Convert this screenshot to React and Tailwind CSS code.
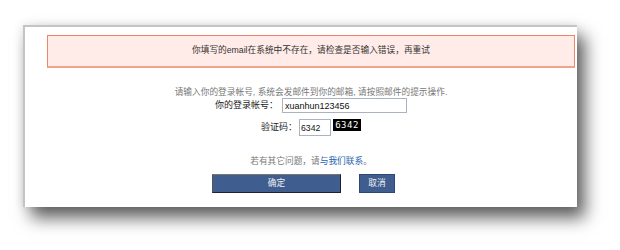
import React from "react";

const font = "font-['Liberation_Sans','Noto_Sans_CJK_SC',sans-serif]";

export default function App() {
  return (
    <div className={`w-[620px] h-[250px] bg-white pl-[23px] pt-[25px] ${font}`}>
      {/* Panel */}
      <div className="w-[554px] h-[182px] bg-white border-l-2 border-t-2 border-[#c4c4c4] shadow-[8px_11px_16px_rgba(0,0,0,0.62),0_0_10px_rgba(0,0,0,0.1)]">
        <div className="ml-[22px] w-[528px] flex flex-col">
          {/* Error message */}
          <div className="mt-[8px] h-[33px] flex items-center justify-center bg-[#ffebe8] border border-[#e9866c] border-b-2 border-b-[#f2a38c] text-[8.7px] text-[#333]">
            你填写的email在系统中不存在，请检查是否输入错误，再重试
          </div>

          <p className="mt-[18px] h-[12px] leading-[12px] text-center text-[8.7px] text-[#777]">
            请输入你的登录帐号, 系统会发邮件到你的邮箱, 请按照邮件的提示操作.
          </p>

          <div className="flex items-center justify-center gap-[4px]">
            <span className="text-[9px] text-[#222]">你的登录帐号：</span>
            <input
              defaultValue="xuanhun123456"
              className="w-[125px] h-[15px] px-[2px] border border-[#a9b3c4] text-[9px] text-[#111] outline-none"
            />
          </div>

          <div className="mt-[6px] flex items-center justify-center">
            <span className="text-[9px] text-[#222]">验证码：</span>
            <input
              defaultValue="6342"
              className="ml-[2px] w-[32px] h-[17px] px-[1px] border border-[#a9b3c4] text-[8.7px] text-[#111] outline-none"
            />
            <span className="ml-[2px] self-start w-[28px] h-[12px] bg-black text-white text-[9px] leading-[12px] text-center tracking-[0.5px] font-['DejaVu_Sans_Mono',monospace]">
              6342
            </span>
          </div>

          <p className="mt-[19px] h-[12px] leading-[12px] text-center text-[8.7px] text-[#777]">
            若有其它问题，请<span className="text-[#1d5fb0]">与我们联系</span>。
          </p>

          <div className="mt-[7px] pr-[15px] flex justify-center gap-[18px]">
            <button className="w-[129px] h-[19px] bg-[#3f5d8f] border border-[#1c2233] border-t-[#777] border-l-[#555] text-[#f0f0f0] text-[8.7px]">
              确定
            </button>
            <button className="w-[36px] h-[19px] bg-[#3f5d8f] border border-[#2d4876] text-[#f0f0f0] text-[8.7px]">
              取消
            </button>
          </div>
        </div>
      </div>
    </div>
  );
}
